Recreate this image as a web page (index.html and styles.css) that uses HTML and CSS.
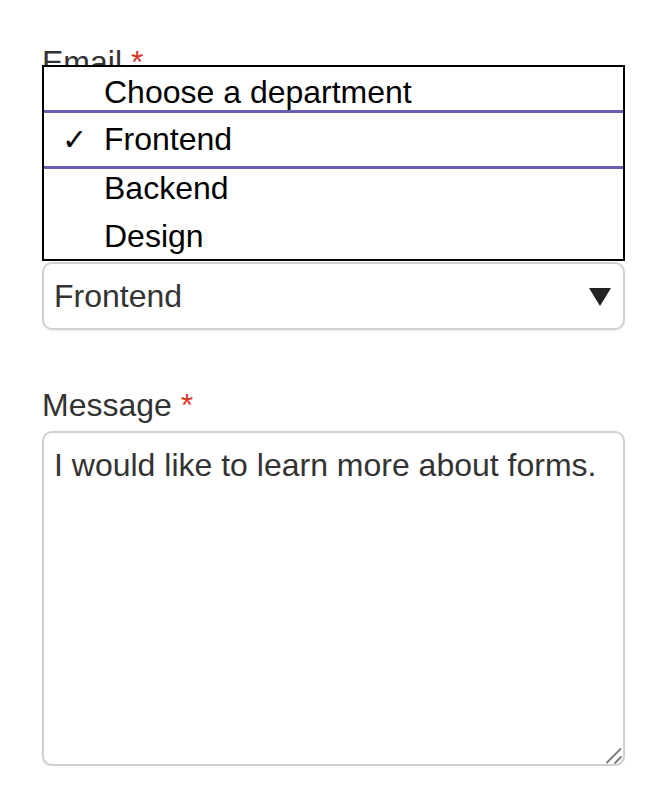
FILE: index.html
```html
<!DOCTYPE html>
<html lang="en">
<head>
<meta charset="utf-8">
<title>Contact form</title>
<link rel="stylesheet" href="styles.css">
</head>
<body>
<form class="form">
  <div class="field field-email">
    <label class="label" for="email">Email <span class="req">*</span></label>
    <input class="input" id="email" type="email">
  </div>
  <div class="field field-dept">
    <label class="label label-covered" for="dept">Department <span class="req">*</span></label>
    <div class="select">
      <span class="select-value">Frontend</span>
      <svg class="select-arrow" width="22" height="18" viewBox="0 0 22 18"><path d="M0 0H22L11 18Z" fill="#222"/></svg>
    </div>
    <ul class="popup">
      <li class="option opt-placeholder"><span class="check"></span>Choose a department</li>
      <li class="option selected"><span class="check">✓</span>Frontend</li>
      <li class="option opt-backend"><span class="check"></span>Backend</li>
      <li class="option opt-design"><span class="check"></span>Design</li>
    </ul>
  </div>
  <div class="field field-msg">
    <label class="label" for="msg">Message <span class="req">*</span></label>
    <div class="textarea-wrap">
      <textarea class="textarea" id="msg">I would like to learn more about forms.</textarea>
      <svg class="resizer" width="18" height="18" viewBox="0 0 18 18"><path d="M3 16.5L16.5 3M11 17L17 11" stroke="#7a7a7a" stroke-width="1.8" stroke-linecap="round" fill="none"/></svg>
    </div>
  </div>
</form>
</body>
</html>
```
FILE: styles.css
```css
* { box-sizing: border-box; }
html, body { margin: 0; background: #fff; }
body { font-family: "Liberation Sans", Arial, sans-serif; color: #333; }
.form { width: 666px; padding: 44px 41px 0 42px; }
.field { position: relative; display: flex; flex-direction: column; }
.label { font-size: 32px; line-height: 36px; color: #333; }
.label-covered { visibility: hidden; }
.req { color: #d9342b; }
.input { margin-top: 10px; height: 68px; border: 2px solid #ccc; border-radius: 10px; }
.field-dept { margin-top: 48px; }
.select {
  margin-top: 20px; height: 68px; border: 2px solid #d0d0d0; border-radius: 10px;
  display: flex; align-items: center; justify-content: space-between;
  padding: 0 12px 0 10px; font-size: 32px; color: #333;
  box-shadow: 0 1px 2px rgba(0,0,0,0.08);
}
.select-arrow { display: block; margin-top: 2px; }
.popup {
  position: absolute; left: 0; top: -141px; width: 583px; height: 196px;
  margin: 0; padding: 0; list-style: none; background: #fff;
  border: 2px solid #000; font-size: 32px; line-height: 37px; color: #000;
}
.option { display: flex; align-items: flex-start; }
.opt-placeholder { height: 43px; padding-top: 7px; }
.option.selected { height: 59px; align-items: center; border-top: 3px solid #6a5eb1; border-bottom: 3px solid #6a5eb1; }
.opt-backend { height: 44px; padding-top: 1px; }
.opt-design { height: 46px; padding-top: 5px; }
.check { width: 60px; padding-left: 18px; font-size: 30px; }
.field-msg { margin-top: 57px; }
.textarea-wrap { position: relative; margin-top: 8px; }
.textarea {
  display: block; height: 335px; width: 583px; resize: none;
  border: 2px solid #d0d0d0; border-radius: 10px; padding: 14px 10px 10px;
  font-family: "Liberation Sans", Arial, sans-serif; font-size: 32px; line-height: 37px; color: #333;
  box-shadow: 0 1px 2px rgba(0,0,0,0.08);
}
.resizer { position: absolute; right: 3px; bottom: 2px; }
```
